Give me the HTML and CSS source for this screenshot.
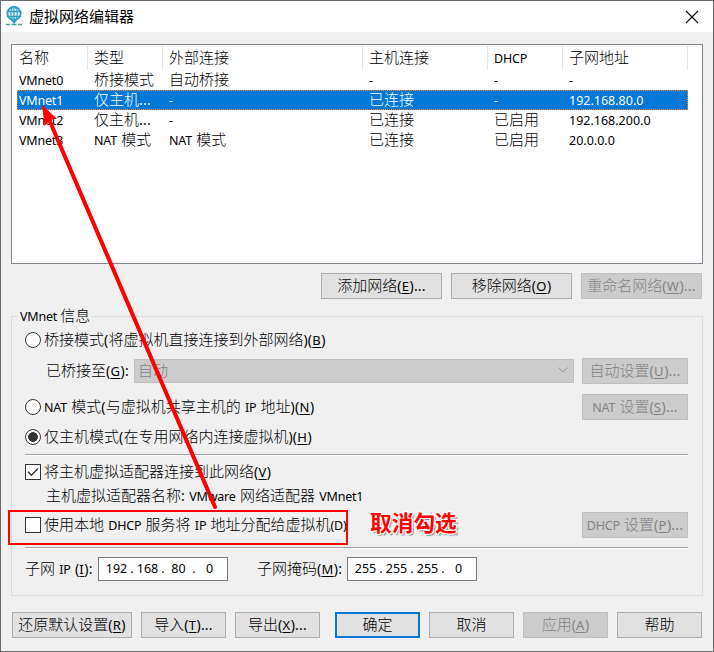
FILE: index.html
```html
<!DOCTYPE html>
<html lang="zh-CN">
<head>
<meta charset="utf-8">
<title>虚拟网络编辑器</title>
<link rel="stylesheet" href="styles.css">
</head>
<body>
<div class="window">
  <header class="titlebar">
    <svg class="logo" width="18" height="20" viewBox="0 0 18 20" fill="none">
      <circle cx="9" cy="7.500" r="6.6" stroke="#2c9fc4" stroke-width="2"/>
      <ellipse cx="9" cy="7.500" rx="3.2" ry="6.6" stroke="#2c9fc4" stroke-width="1.3"/>
      <path d="M2 5.5h14M2 10.5h14M9 1v16" stroke="#2c9fc4" stroke-width="1.3"/>
      <path d="M6 14.500h6l-3 3.500z" fill="#2c9fc4"/>
      <path d="M1 18.500h4M6.5 18.500h5M13 18.500h4" stroke="#3f9f92" stroke-width="1.6"/>
    </svg>
    <h1>虚拟网络编辑器</h1>
    <svg class="close" width="14" height="14" viewBox="0 0 14 14"><path d="M1 1l12 12M13 1L1 13" stroke="#111" stroke-width="1.2"/></svg>
  </header>
  <main>
    <div class="list">
      <div class="row head"><span>名称</span><span>类型</span><span>外部连接</span><span>主机连接</span><span><i>DHCP</i></span><span>子网地址</span></div>
      <div class="row"><span><i>VMnet0</i></span><span>桥接模式</span><span>自动桥接</span><span><i>-</i></span><span><i>-</i></span><span><i>-</i></span></div>
      <div class="row selected"><span><i>VMnet1</i></span><span>仅主机<i class="key">...</i></span><span><i>-</i></span><span>已连接</span><span><i>-</i></span><span><i class="num">192.168.80.0</i></span></div>
      <div class="row"><span><i>VMnet2</i></span><span>仅主机<i class="key">...</i></span><span><i>-</i></span><span>已连接</span><span>已启用</span><span><i class="num">192.168.200.0</i></span></div>
      <div class="row"><span><i>VMnet3</i></span><span><i>NAT </i>模式</span><span><i>NAT </i>模式</span><span>已连接</span><span>已启用</span><span><i class="num">20.0.0.0</i></span></div>
    </div>
    <div class="list-actions">
      <button>添加网络<i class="key">(<u>E</u>)...</i></button>
      <button>移除网络<i class="key">(<u>O</u>)</i></button>
      <button disabled>重命名网络<i class="key">(<u>W</u>)...</i></button>
    </div>
    <section class="group">
      <h2><i>VMnet </i>信息</h2>
      <div class="line bridge"><b class="radio"></b><span>桥接模式<i class="key">(</i>将虚拟机直接连接到外部网络<i class="key">)(<u>B</u>)</i></span></div>
      <div class="line adapter"><span class="label">已桥接至<i class="key">(<u>G</u>):</i></span>
        <div class="combo"><span>自动</span><svg width="10" height="6" viewBox="0 0 10 6"><path d="M.5.5L5 5 9.5.5" fill="none" stroke="#999"/></svg></div>
        <button disabled>自动设置<i class="key">(<u>U</u>)...</i></button></div>
      <div class="line nat"><b class="radio"></b><span><i>NAT </i>模式<i class="key">(</i>与虚拟机共享主机的<i> IP </i>地址<i class="key">)(<u>N</u>)</i></span><button disabled><i>NAT </i>设置<i class="key">(<u>S</u>)...</i></button></div>
      <div class="line host"><b class="radio on"></b><span>仅主机模式<i class="key">(</i>在专用网络内连接虚拟机<i class="key">)(<u>H</u>)</i></span></div>
      <hr>
      <div class="line connect"><b class="check"><svg width="14" height="14" viewBox="0 0 14 14"><path d="M2 6.8l3.4 3.4L12 3.5" fill="none" stroke="#333" stroke-width="1.5"/></svg></b><span>将主机虚拟适配器连接到此网络<i class="key">(<u>V</u>)</i></span></div>
      <div class="line name"><span>主机虚拟适配器名称<i class="key">:</i><i> VMware </i>网络适配器<i> VMnet1</i></span></div>
      <div class="line dhcp"><b class="check"></b><span>使用本地<i> DHCP </i>服务将<i> IP </i>地址分配给虚拟机<i>(D)</i></span><button disabled><i>DHCP </i>设置<i class="key">(<u>P</u>)...</i></button></div>
      <hr>
      <div class="line subnet"><span class="ip-label">子网<i> IP </i><i class="key">(<u>I</u>):</i></span>
        <div class="ip"><i>192</i><i>.</i><i>168</i><i>.</i><i>80</i><i>.</i><i>0</i></div>
        <span class="mask-label">子网掩码<i class="key">(<u>M</u>):</i></span>
        <div class="ip"><i>255</i><i>.</i><i>255</i><i>.</i><i>255</i><i>.</i><i>0</i></div></div>
    </section>
    <footer>
      <button class="wide">还原默认设置<i class="key">(<u>R</u>)</i></button>
      <button>导入<i class="key">(<u>T</u>)...</i></button>
      <button>导出<i class="key">(<u>X</u>)...</i></button>
      <button class="primary">确定</button>
      <button>取消</button>
      <button disabled>应用<i class="key">(<u>A</u>)</i></button>
      <button>帮助</button>
    </footer>
  </main>
  <div class="callout-box"></div>
  <div class="callout-text">取消勾选</div>
  <svg class="arrow" width="714" height="652" viewBox="0 0 714 652"><path d="M214 506L47 116" stroke="#f00" stroke-width="4" stroke-linecap="round"/><path d="M41 103.500L55.500 117.500L49 119L43.500 125Z" fill="#f00"/></svg>
</div>
</body>
</html>
```
FILE: styles.css
```css
* { box-sizing: border-box; }
body { margin: 0; font: 300 15px/20px "Noto Sans CJK SC", sans-serif; color: #000; background: #f0f0f0; }
i { font: 400 12.5px/1 "Noto Sans", sans-serif; letter-spacing: -.2px; word-spacing: 1.2px; white-space: pre; }
i.key { font-size: 14px; letter-spacing: .2px; }
u { font-size: 13px; letter-spacing: .6px; text-underline-offset: 2px; text-decoration-thickness: 1px; }
i.num { letter-spacing: 0; }
.window { position: relative; width: 714px; height: 652px; overflow: hidden; border: 1px solid #6b6b6b; }
.titlebar { display: flex; align-items: center; height: 31px; background: #fff; padding: 0 14px 0 4px; }
.titlebar h1 { margin: 0 auto 0 6px; padding-bottom: 2px; font-size: 15px; font-weight: 400; line-height: 20px; }
.logo { margin-top: -2px; }
.close { display: block; }
main { padding: 12px 10px 0; }
.list { height: 220px; border: 1px solid #828790; background: #fff; padding-left: 5px; }
.row { display: grid; grid-template-columns: 71px 75px 200px 125px 75px 125px; width: 671px; height: 20px; line-height: 18px; }
.row span { padding-left: 6px; white-space: nowrap; }
.row span:first-child { padding-left: 2px; }
.head { height: 25px; line-height: 22px; }
.head span { height: 24px; margin-top: 1px; border-right: 1px solid #e5e5e5; }
.selected { background: #0078d7; color: #fff; outline: 1px dotted #ff8728; outline-offset: -1px; }
button { width: 85px; height: 26px; padding: 0 0 2px; border: 1px solid #adadad; background: #e1e1e1; font: inherit; color: #000; white-space: nowrap; line-height: 22px; }
button:disabled { background: #ccc; border-color: #bfbfbf; color: #838383; }
.list-actions { display: flex; justify-content: flex-end; gap: 9px; margin-top: 9px; padding-right: 1px; }
.list-actions button { width: 121px; }
.group { height: 280px; margin-top: 17px; border: 1px solid #dcdcdc; padding: 0 14px 0 13px; }
.group h2 { width: max-content; height: 16px; margin: -9px 0 0 -7px; padding: 0 2px; background: #f0f0f0; font-size: 15px; font-weight: 300; line-height: 14px; }
.group h2 i { word-spacing: 0; }
.line { display: flex; align-items: center; white-space: nowrap; }
.line > span { padding-bottom: 2px; }
.line > button { width: 106px; margin-left: auto; }
.radio { width: 16px; height: 16px; margin-right: 3px; border: 1px solid #333; border-radius: 50%; background: #fff; }
.radio.on { background: radial-gradient(circle, #333 4.500px, #fff 5.200px); }
.check { width: 16px; height: 16px; margin-right: 3px; border: 1px solid #333; background: #fff; }
.check svg { display: block; }
.bridge { height: 30px; margin-top: 1px; }
.adapter { height: 32px; padding-left: 21px; }
.label { width: 88px; }
.combo { display: flex; align-items: center; justify-content: space-between; width: 440px; height: 24px; padding: 0 5px 2px 3px; border: 1px solid #bfbfbf; background: #ccc; color: #838383; }
.nat { height: 40px; }
.host { height: 20px; }
hr { height: 2px; margin: 0; border: 0; border-top: 1px solid #a0a0a0; border-bottom: 1px solid #fff; }
.host + hr { margin-top: 7px; }
.connect { height: 32px; }
.name { height: 15px; padding-left: 21px; }
.dhcp { height: 44px; }
.subnet { height: 40px; }
.ip-label { width: 73px; }
.mask-label { width: 90px; margin-left: 29px; }
.ip { display: grid; grid-template-columns: 25px 6px 25px 6px 25px 6px 25px; width: 130px; height: 24px; padding-left: 5px; border: 1px solid #7a7a7a; background: #fff; text-align: center; align-items: center; }
.ip i { letter-spacing: 0; }
footer { display: flex; gap: 9px; margin-top: 16px; padding-left: 1px; }
footer .wide { width: 120px; }
.primary { border: 2px solid #0078d7; line-height: 20px; margin-left: 6px; }
.callout-box { position: absolute; left: 7px; top: 509px; width: 340px; height: 35px; border: 2px solid #f00; }
.callout-text { position: absolute; left: 369px; top: 506px; font-size: 21.700px; line-height: 30px; font-weight: 700; color: #f00; text-shadow: -1px -1px #fff, 1px -1px #fff, -1px 1px #fff, 1px 1px #fff, 2px 2px 1px #888; }
.arrow { position: absolute; left: 0; top: 0; }
```
